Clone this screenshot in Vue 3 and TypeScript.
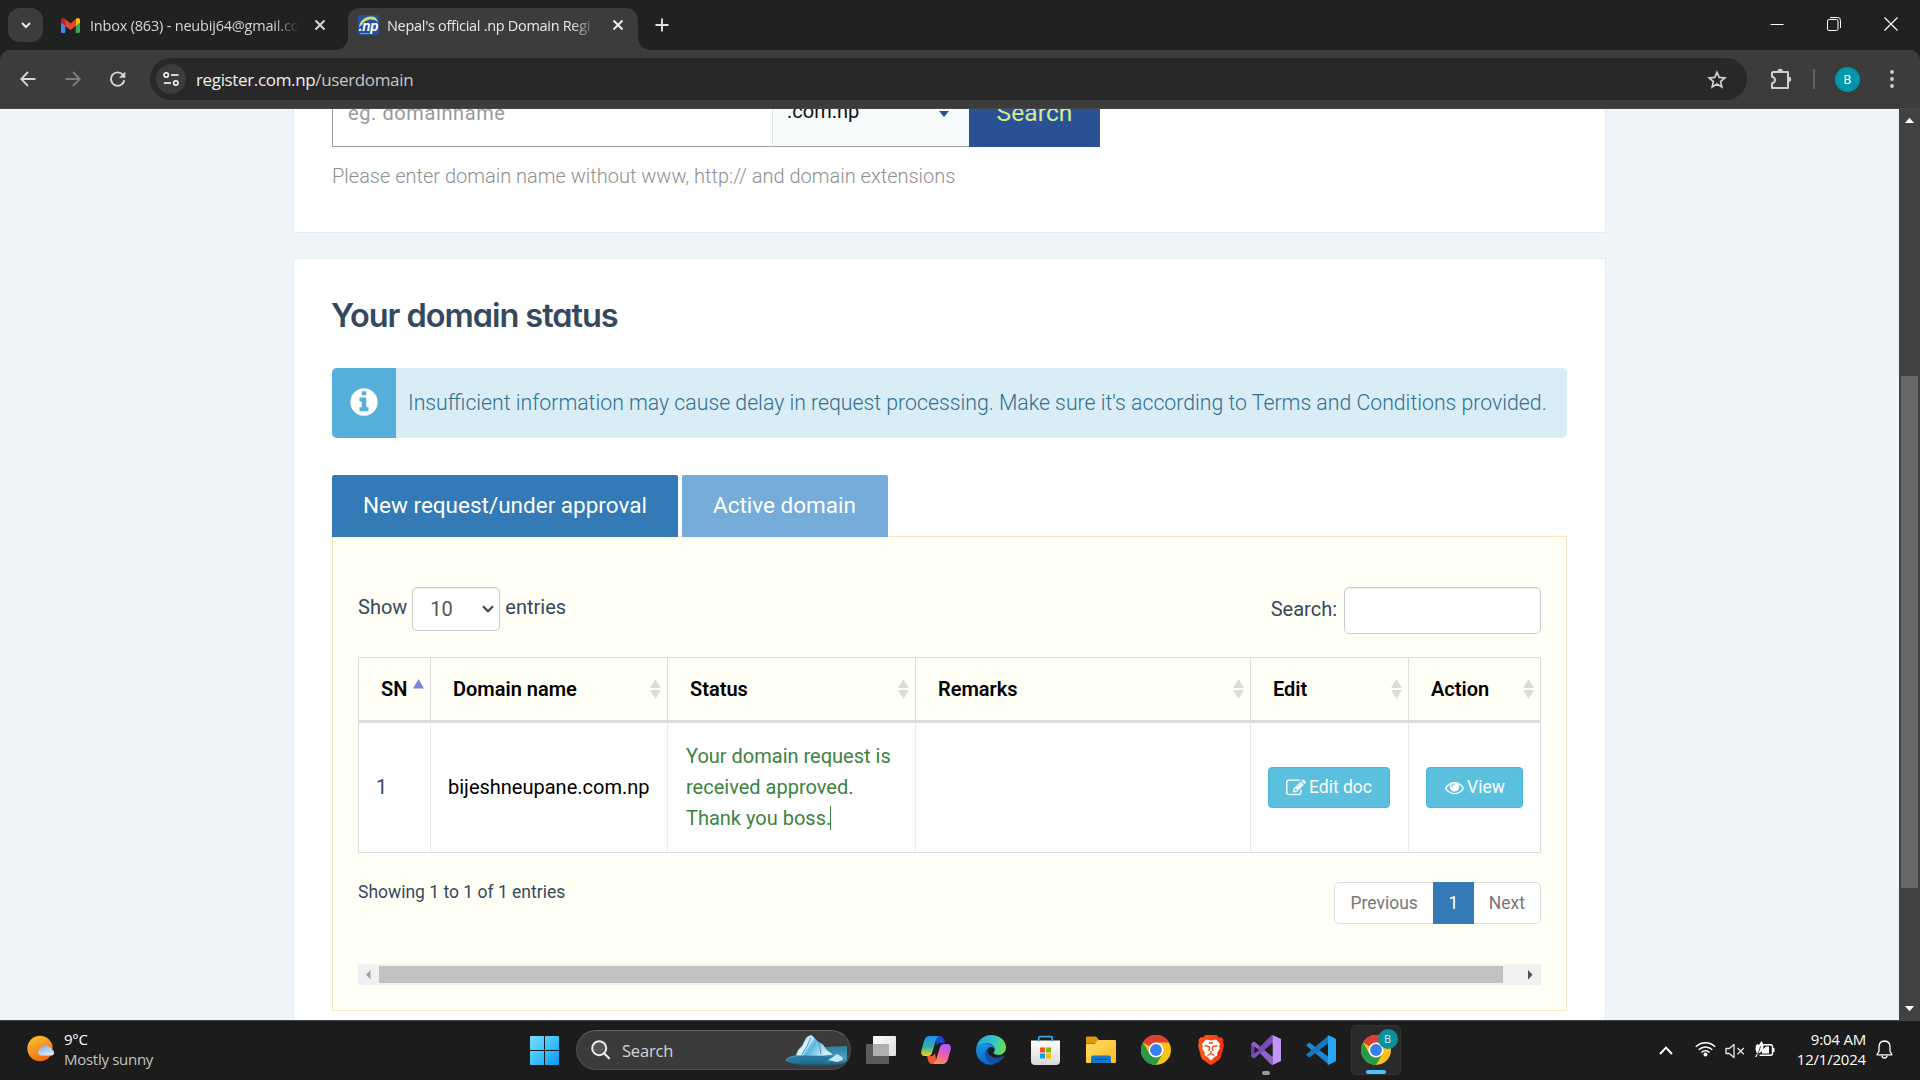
<script setup lang="ts">
import { ref } from 'vue'

interface Column {
  label: string
  width: number
  sorted?: boolean
}

const columns: Column[] = [
  { label: 'SN', width: 72, sorted: true },
  { label: 'Domain name', width: 237 },
  { label: 'Status', width: 248 },
  { label: 'Remarks', width: 335 },
  { label: 'Edit', width: 158 },
  { label: 'Action', width: 132 },
]

const tabs = ['New request/under approval', 'Active domain']
const activeTab = ref(0)
const page = ref(1)
</script>

<template>
  <div class="screen">
    <!-- Browser tab strip -->
    <header class="strip">
      <button class="tab-search">
        <svg width="12" height="12" viewBox="0 0 12 12"><path d="M2 4l4 4 4-4" fill="none" stroke="#e8e8e8" stroke-width="2" /></svg>
      </button>
      <div class="tab">
        <svg class="gmail" width="19" height="15" viewBox="0 0 19 15">
          <path d="M0 2v11.700q0 1.300 1.300 1.300H4.300V5z" fill="#4285f4" />
          <path d="M19 2v11.700q0 1.300-1.300 1.300h-3V5z" fill="#34a853" />
          <path d="M14.700 1.300V8L19 4.600V2.200C19 .2 16.700-.7 15.300.8z" fill="#fbbc04" />
          <path d="M0 2.200v2.400L4.300 8V1.300L3.700.8C2.300-.7 0 .2 0 2.200z" fill="#c5221f" />
          <path d="M4.300 1.300V8l5.200 4 5.200-4V1.300L9.500 5.400z" fill="#ea4335" />
        </svg>
        <span class="tab-title first">Inbox (863) - neubij64@gmail.co</span>
        <svg class="close" width="12" height="12" viewBox="0 0 12 12"><path d="M1.500 1.500l9 9M10.500 1.500l-9 9" stroke="#d8d8d8" stroke-width="1.900" /></svg>
      </div>
      <div class="tab active">
        <svg class="favicon" width="21" height="20" viewBox="0 0 21 20">
          <rect width="21" height="20" rx="1.500" fill="#27519b" />
          <path d="M1 12C2 4 11-1 18 3l2 4C14 2 6 5 4 10z" fill="#c9e265" />
          <path d="M2 18.500h9" stroke="#7fa65a" stroke-width="1" />
          <text x="0.500" y="15.500" font-size="14" font-weight="700" font-style="italic" fill="#fff" textLength="20" lengthAdjust="spacingAndGlyphs" font-family="Liberation Sans, sans-serif">.np</text>
        </svg>
        <span class="tab-title second">Nepal's official .np Domain Regi</span>
        <svg class="close" width="12" height="12" viewBox="0 0 12 12"><path d="M1.500 1.500l9 9M10.500 1.500l-9 9" stroke="#f0f0f0" stroke-width="1.900" /></svg>
      </div>
      <svg class="plus" width="14" height="14" viewBox="0 0 14 14"><path d="M7 .5v13M.5 7h13" stroke="#e0e0e0" stroke-width="1.900" /></svg>
      <div class="win-controls">
        <svg width="14" height="14" viewBox="0 0 14 14"><path d="M.5 7.500h13" stroke="#fff" /></svg>
        <svg width="14" height="14" viewBox="0 0 14 14"><rect x=".5" y="2.500" width="10.500" height="11" rx="1.500" fill="none" stroke="#fff" /><path d="M3 .5h7.500q3 0 3 3V11" fill="none" stroke="#fff" /></svg>
        <svg width="14" height="14" viewBox="0 0 14 14"><path d="M.5.5l13 13M13.500.5l-13 13" stroke="#fff" stroke-width="1.200" /></svg>
      </div>
    </header>

    <!-- Browser toolbar -->
    <div class="toolbar-wrap">
      <div class="toolbar">
        <svg class="nav" width="16" height="16" viewBox="0 0 16 16"><path d="M15.500 8H1.500M8 1L1.200 8 8 15" fill="none" stroke="#d5d5d5" stroke-width="1.800" /></svg>
        <svg class="nav" width="16" height="16" viewBox="0 0 16 16"><path d="M.5 8h14M8 1l6.800 7L8 15" fill="none" stroke="#7d7d7d" stroke-width="1.800" /></svg>
        <svg class="nav" width="16" height="16" viewBox="0 0 16 16"><path d="M14.300 9.300A6.700 6.700 0 1 1 13.200 4.200L14.500 6" fill="none" stroke="#d5d5d5" stroke-width="1.900" /><path d="M15.300.5v6.300H9z" fill="#d5d5d5" /></svg>
        <div class="omnibox">
          <span class="site-chip">
            <svg width="16" height="14" viewBox="0 0 16 14"><g fill="none" stroke="#e6e6e6" stroke-width="1.800"><circle cx="3.200" cy="3" r="2.200" /><path d="M8 3h7.500" /><circle cx="12.800" cy="11" r="2.200" /><path d="M.8 11H8" /></g></svg>
          </span>
          <span class="url">register.com.np<i>/userdomain</i></span>
          <svg class="star" width="20" height="19" viewBox="0 0 20 19"><path d="M10 2.300l2.250 5.100 5.550.5-4.200 3.700 1.250 5.400L10 14.100 5.150 17l1.250-5.400L2.200 7.900l5.550-.5z" fill="none" stroke="#d0d0d0" stroke-width="1.700" /></svg>
        </div>
        <svg class="puzzle" width="22" height="22" viewBox="0 0 22 22"><path d="M2 4h16v5.500M18 13v7H2v-4.700q3-.6 3-3.300t-3-3.300V4" fill="none" stroke="#cfcfcf" stroke-width="2" stroke-linejoin="round" /><path d="M7.500 3.500a2.700 2.700 0 0 1 5.400 0zM18.500 8.600a2.700 2.700 0 0 1 0 5.400z" fill="#cfcfcf" /><path d="M18 8v6" stroke="#cfcfcf" stroke-width="2" /></svg>
        <span class="sep"></span>
        <span class="avatar">B</span>
        <svg class="dots" width="4" height="20" viewBox="0 0 4 20"><g fill="#d0d0d0"><circle cx="2" cy="3" r="1.900" /><circle cx="2" cy="10" r="1.900" /><circle cx="2" cy="17" r="1.900" /></g></svg>
      </div>
    </div>

    <!-- Page -->
    <div class="viewport">
      <main class="page">
        <section class="card search-card">
          <div class="search-row">
            <div class="domain-input">eg. domainname</div>
            <div class="ext-select">.com.np<span class="caret"></span></div>
            <button class="search-btn">Search</button>
          </div>
          <p class="hint">Please enter domain name without www, http:// and domain extensions</p>
        </section>

        <section class="card status-card">
          <h2>Your domain status</h2>
          <div class="alert">
            <span class="alert-icon">
              <svg width="32" height="32" viewBox="0 0 1792 1792"><path fill="#fff" d="M1152 1376v-160q0-14-9-23t-23-9h-96v-512q0-14-9-23t-23-9h-320q-14 0-23 9t-9 23v160q0 14 9 23t23 9h96v320h-96q-14 0-23 9t-9 23v160q0 14 9 23t23 9h448q14 0 23-9t9-23zm-128-896v-160q0-14-9-23t-23-9h-192q-14 0-23 9t-9 23v160q0 14 9 23t23 9h192q14 0 23-9t9-23zm640 416q0 209-103 385.500t-279.500 279.500-385.500 103-385.500-103-279.500-279.500-103-385.500 103-385.500 279.500-279.500 385.500-103 385.500 103 279.500 279.500 103 385.500z" /></svg>
            </span>
            <span class="alert-text">Insufficient information may cause delay in request processing. Make sure it's according to Terms and Conditions provided.</span>
          </div>

          <div class="tabs">
            <button v-for="(t, i) in tabs" :key="t" class="page-tab" :class="{ on: i === activeTab }" @click="activeTab = i">{{ t }}</button>
          </div>

          <div class="panel">
            <div class="controls">
              <div class="length">
                <span>Show</span>
                <div class="len-select">10
                  <svg width="12" height="8" viewBox="0 0 12 8"><path d="M1 1.200l5 5 5-5" fill="none" stroke="#444" stroke-width="2.100" /></svg>
                </div>
                <span>entries</span>
              </div>
              <label class="filter">Search:<input type="text" /></label>
            </div>

            <table>
              <colgroup><col v-for="c in columns" :key="c.label" :style="{ width: c.width + 'px' }" /></colgroup>
              <thead>
                <tr>
                  <th v-for="c in columns" :key="c.label">
                    <div class="th-inner">
                      <span>{{ c.label }}</span>
                      <svg v-if="c.sorted" width="11" height="22" viewBox="0 0 11 22"><path d="M5.500 1L11 10.500H0z" fill="#8080e0" /></svg>
                      <svg v-else width="11" height="22" viewBox="0 0 11 22"><path d="M5.500 1L11 10H0zM0 12h11L5.500 21z" fill="#dcdcdc" /></svg>
                    </div>
                  </th>
                </tr>
              </thead>
              <tbody>
                <tr>
                  <td>1</td>
                  <td class="name">bijeshneupane.com.np</td>
                  <td class="status">Your domain request is<br />received approved.<br />Thank you boss.<span class="cursor"></span></td>
                  <td></td>
                  <td>
                    <button class="btn">
                      <svg width="20" height="20" viewBox="0 0 1792 1792"><path fill="#fff" d="M888 1184l116-116-152-152-116 116v56h96v96h56zm440-720q-16-16-33 1l-350 350q-17 17-1 33t33-1l350-350q17-17 1-33zm80 594v190q0 119-84.500 203.500t-203.500 84.500h-832q-119 0-203.500-84.500t-84.500-203.500v-832q0-119 84.500-203.500t203.500-84.500h832q63 0 117 25 15 7 18 23 3 17-9 29l-49 49q-14 14-32 8-23-6-45-6h-832q-66 0-113 47t-47 113v832q0 66 47 113t113 47h832q66 0 113-47t47-113v-126q0-13 9-22l64-64q15-15 35-7t20 29zm-96-738l288 288-672 672h-288v-288zm444 132l-92 92-288-288 92-92q28-28 68-28t68 28l152 152q28 28 28 68t-28 68z" /></svg>
                      Edit doc
                    </button>
                  </td>
                  <td>
                    <button class="btn">
                      <svg width="19" height="19" viewBox="0 0 1792 1792"><path fill="#fff" d="M1664 960q-152-236-381-353 61 104 61 225 0 185-131.500 316.500t-316.500 131.500-316.500-131.500-131.500-316.500q0-121 61-225-229 117-381 353 133 205 333.500 326.500t434.500 121.500 434.500-121.500 333.500-326.500zm-720-384q0-20-14-34t-34-14q-125 0-214.500 89.500t-89.500 214.500q0 20 14 34t34 14 34-14 14-34q0-86 61-147t147-61q20 0 34-14t14-34zm848 384q0 34-20 69-140 230-376.500 368.500t-499.500 138.500-499.500-139-376.500-368q-20-35-20-69t20-69q140-229 376.500-368t499.500-139 499.500 139 376.500 368q20 35 20 69z" /></svg>
                      View
                    </button>
                  </td>
                </tr>
              </tbody>
            </table>

            <div class="table-foot">
              <span>Showing 1 to 1 of 1 entries</span>
              <nav class="pager"><a>Previous</a><a class="current">{{ page }}</a><a>Next</a></nav>
            </div>

            <div class="hscroll">
              <svg width="21" height="21" viewBox="0 0 21 21"><path d="M12.500 6v9.500L8 10.700z" fill="#a3a3a3" /></svg>
              <span class="hthumb"></span>
              <svg class="right" width="21" height="21" viewBox="0 0 21 21"><path d="M8 6v9.500l4.500-4.800z" fill="#505050" /></svg>
            </div>
          </div>
        </section>
      </main>

      <div class="vscroll">
        <svg width="21" height="21" viewBox="0 0 21 21"><path d="M6 14l4.500-5.200L15 14z" fill="#fff" /></svg>
        <span class="vthumb"></span>
        <svg width="21" height="21" viewBox="0 0 21 21"><path d="M6 8l4.500 5.200L15 8z" fill="#fff" /></svg>
      </div>
    </div>

    <!-- Windows taskbar -->
    <footer class="taskbar">
      <div class="weather">
        <svg width="30" height="28" viewBox="0 0 30 28">
          <defs>
            <linearGradient id="sun" x1="0.200" y1="0" x2="0.700" y2="1"><stop offset="0" stop-color="#f7c331" /><stop offset="1" stop-color="#f4650c" /></linearGradient>
            <linearGradient id="cloud" x1="0" y1="0" x2="0.500" y2="1"><stop offset="0" stop-color="#7fa6e6" /><stop offset="1" stop-color="#d9e6fb" /></linearGradient>
          </defs>
          <circle cx="13" cy="13.500" r="12.700" fill="url(#sun)" />
          <path d="M13.500 20.500a3.400 3.400 0 0 1-.2-6.500 5 5 0 0 1 9-1.800q2.500.3 2.700 2.600a3 3 0 0 1 .2 5.700z" fill="url(#cloud)" />
        </svg>
        <div class="weather-text"><b>9°C</b><span>Mostly sunny</span></div>
      </div>

      <div class="apps">
        <div class="cell start">
          <svg width="29" height="29" viewBox="0 0 29 29">
            <defs><linearGradient id="win" x1="0" y1="0" x2="1" y2="1"><stop offset="0" stop-color="#7adcff" /><stop offset=".5" stop-color="#3cc3fb" /><stop offset="1" stop-color="#0a93f5" /></linearGradient></defs>
            <path d="M1 0h13v14H0V1q0-1 1-1zM15 0h13q1 0 1 1v13H15zM0 15h14v14H1q-1 0-1-1zM15 15h14v13q0 1-1 1H15z" fill="url(#win)" />
          </svg>
        </div>
        <div class="task-search">
          <svg width="19" height="20" viewBox="0 0 19 20"><circle cx="8.200" cy="8.200" r="7" fill="#555" stroke="#ececec" stroke-width="2" /><path d="M13 13.300l5 5" stroke="#ececec" stroke-width="2.200" stroke-linecap="round" /></svg>
          <span>Search</span>
          <svg class="iceberg" width="62" height="31" viewBox="0 0 62 31">
            <defs>
              <linearGradient id="sea" x1="0" y1="0" x2="0" y2="1"><stop offset="0" stop-color="#2b7e9c" /><stop offset=".6" stop-color="#4d9fc0" /><stop offset="1" stop-color="#0f4c6e" /></linearGradient>
              <linearGradient id="ice" x1="0" y1="0" x2="1" y2=".4"><stop offset="0" stop-color="#4aa7d6" /><stop offset=".4" stop-color="#e2f7ff" /><stop offset=".55" stop-color="#58b3df" /><stop offset="1" stop-color="#d4f1fc" /></linearGradient>
            </defs>
            <path d="M36 12.500q13-1.500 26-1.500v14q-1 3-8 4.500-20 3-40 .5Q4 28.500 0 25q4-4 12-5z" fill="url(#sea)" />
            <path d="M11 20l2-5 4-4 4-8q3-3.500 6-2.500l6 6 5 3 4 6 6 4-10 1q-18 1-27-.500z" fill="url(#ice)" />
            <path d="M26 2l-4 9-5 8M34 8l2 11" stroke="#3d9dca" stroke-width="1" fill="none" />
            <path d="M1 25q8-5 21-4.500t28 1l-8 5q-20 4-41-1.500z" fill="#1f6d94" opacity=".75" />
            <path d="M43 25l5-3 4-3 5 3 1 3-6 2z" fill="#bfe7f7" />
          </svg>
        </div>
        <div class="cell">
          <svg width="30" height="28" viewBox="0 0 30 28"><defs><linearGradient id="tv" x1="0" y1="0" x2="1" y2="1"><stop offset="0" stop-color="#fff" /><stop offset="1" stop-color="#dcdcdc" /></linearGradient></defs><rect x="0" y="8" width="23" height="20" rx="1" fill="#5b5b5b" /><rect x="7" y="0" width="23" height="20" rx="1" fill="url(#tv)" /><path d="M7 8h16v12H7z" fill="#b0b0b0" /></svg>
        </div>
        <div class="cell">
          <svg width="30" height="28" viewBox="0 0 30 28">
            <defs>
              <linearGradient id="cpA" x1="0" y1="0" x2="0" y2="1"><stop offset="0" stop-color="#1c8ef0" /><stop offset=".55" stop-color="#2fb3a6" /><stop offset="1" stop-color="#f5d515" /></linearGradient>
              <linearGradient id="cpB" x1=".3" y1="0" x2="0" y2="1"><stop offset="0" stop-color="#b25cf0" /><stop offset=".5" stop-color="#f2639c" /><stop offset="1" stop-color="#ff9a4a" /></linearGradient>
            </defs>
            <path d="M14 0h5q3 0 4 4l1 3h-5q-2 0-3 3z" fill="#1c47c8" />
            <path d="M16 28h-5q-3 0-4-4l-1-4h5q2 0 3-3z" fill="#f0562f" />
            <path d="M8 0h10q-2 1-3 4l-4 13q-1 3-4 3H4q-5 0-3.500-6L3 5Q4.500 0 8 0z" fill="url(#cpA)" />
            <path d="M22 28H12q2-1 3-4l4-13q1-3 4-3h3q5 0 3.500 6L27 23q-1.500 5-5 5z" fill="url(#cpB)" />
          </svg>
        </div>
        <div class="cell">
          <svg width="30" height="30" viewBox="0 0 30 30">
            <defs>
              <linearGradient id="edA" x1="0" y1=".3" x2="1" y2=".5"><stop offset="0" stop-color="#2ba5e4" /><stop offset=".6" stop-color="#35c6c3" /><stop offset="1" stop-color="#6be04d" /></linearGradient>
              <linearGradient id="edB" x1="0" y1="0" x2=".5" y2="1"><stop offset="0" stop-color="#1b9de2" /><stop offset="1" stop-color="#0b65c9" /></linearGradient>
            </defs>
            <path d="M.2 14C1 5.500 7.500 0 15 0c9 0 15 6 15 12.500 0 4.500-3.500 7.500-7.500 7.500-3 0-5-1-5-2.200 0-.8 1.200-1.400 1.200-3.300C18.700 11 15 8 10.500 8 5.500 8 1.500 10.500.2 14z" fill="url(#edA)" />
            <path d="M.2 14C1 10.500 5 7.800 9.500 8c5 .2 8.500 3 8.900 5.500-1-1.300-2.400-1.800-3.900-1.500-3 .6-4.500 4-3.700 8 .8 4.500 4.500 8 8.200 9C9 32-.8 24.500.2 14z" fill="url(#edB)" />
            <path d="M11.500 13.500c-3.500 3.500-3 9 1 12.500 4.500 4 11 3 15.500-4 .5-.8-.2-1.200-1-.8-6 2.700-12.500 1.300-14.500-2.700-.9-1.900-1-3.500-1-5z" fill="#124f9d" />
          </svg>
        </div>
        <div class="cell">
          <svg width="29" height="30" viewBox="0 0 29 30">
            <defs><linearGradient id="st" x1="0" y1="0" x2="0" y2="1"><stop offset="0" stop-color="#fff" /><stop offset="1" stop-color="#d9d9d9" /></linearGradient></defs>
            <path d="M0 5.500h29V26q0 4-4 4H4q-4 0-4-4z" fill="url(#st)" />
            <path d="M7.700 6.500V3q0-1.300 1.300-1.300h11q1.300 0 1.300 1.300v3.500" fill="none" stroke="#2fa9e4" stroke-width="1.700" />
            <path d="M9 12.500h5v5H9z" fill="#f25022" /><path d="M15 12.500h5v5h-5z" fill="#7fba00" /><path d="M9 18.500h5v5H9z" fill="#00a4ef" /><path d="M15 18.500h5v5h-5z" fill="#ffb900" />
          </svg>
        </div>
        <div class="cell">
          <svg width="30" height="28" viewBox="0 0 30 28">
            <defs><linearGradient id="fo" x1="0" y1="0" x2="1" y2="1"><stop offset="0" stop-color="#ffd968" /><stop offset="1" stop-color="#f9bd22" /></linearGradient></defs>
            <path d="M0 1.500Q0 .5 1 .5h8q1.500 0 2.500 1.500l1.500 2v3H0z" fill="#dc9a08" />
            <path d="M0 7.500h9l3-3.500h17q1 0 1 1v21q0 1-1 1H1q-1 0-1-1z" fill="url(#fo)" />
            <path d="M5 27v-5q0-2.500 2.500-2.500h15Q25 19.500 25 22v5z" fill="#1478cf" /><path d="M8.500 23.300h13" stroke="#0b4d90" stroke-width="1.300" />
          </svg>
        </div>
        <div class="cell">
          <svg width="30" height="30" viewBox="0 0 30 30">
            <circle cx="15" cy="15" r="15" fill="#fbc116" />
            <path d="M2 7.500A15 15 0 0 1 28 7.500H15L8.500 11.300z" fill="#dc4035" />
            <path d="M2 7.500A15 15 0 0 0 15 30l6.500-11.300L15 22.500 8.500 18.700z" fill="#2a9a47" />
            <circle cx="15" cy="15" r="7.500" fill="#fff" /><circle cx="15" cy="15" r="5.900" fill="#3b7ded" />
          </svg>
        </div>
        <div class="cell">
          <svg width="26" height="30" viewBox="0 0 26 30">
            <defs><linearGradient id="br" x1="0" y1="0" x2="1" y2="0"><stop offset="0" stop-color="#ff5a1c" /><stop offset="1" stop-color="#fb2f0c" /></linearGradient></defs>
            <path d="M7.500 0h11l2.500 2.500 2.500-.3L25.500 5 25 7.500l1 2.700-3 11.500q-.6 2-2.300 3.200L14.500 29.300q-1.500 1-3 0L5.300 24.900Q3.600 23.700 3 21.700L0 10.200l1-2.700L.5 5l2-2.800 2.500.3z" fill="url(#br)" />
            <path d="M8 4.500l5 1 5-1 4 4.500-1 2.500 1 1.500-3 5 .5 2-3.500 2.500L13 25.500 10 22.500 6.500 20l.5-2-3-5 1-1.500L4 9z" fill="#fff" />
            <path d="M6.500 10.500l4.500 1 .7 1.800-1 2.700M19.500 10.500l-4.500 1-.7 1.800 1 2.700M13 16v2.500M9.500 20.500l3.500-2 3.500 2M11 7.500l2 .7 2-.7" stroke="#fb481a" stroke-width="1.400" fill="none" />
          </svg>
        </div>
        <div class="cell">
          <svg width="30" height="30" viewBox="0 0 30 30">
            <path d="M0 9l3-2.500L8 10.500v9L3 23.500 0 21z" fill="#6a3fa6" />
            <path d="M0 9l3-2.500 18.500 15.500V30L20 29.500z" fill="#8e62c9" />
            <path d="M0 21l3 2.500L21.500 8V0L20 .5z" fill="#7a4cb8" />
            <path d="M21.500 0L30 4v22l-8.500 4z" fill="#c394f7" />
            <path d="M3.500 11.500v7L8 15z" fill="#1e1e1e" /><path d="M21.500 9.500v11L14.500 15z" fill="#1e1e1e" />
          </svg>
          <span class="run"></span>
        </div>
        <div class="cell">
          <svg width="30" height="30" viewBox="0 0 30 30">
            <path d="M.7 9.500l1.800-1.600q.8-.6 1.600 0L22 21.500V29L.7 11q-.9-.7 0-1.500z" fill="#1b86cd" />
            <path d="M.7 20.500l1.800 1.600q.8.600 1.600 0L22 8.500V1L.7 19q-.9.700 0 1.500z" fill="#1677bb" />
            <path d="M21 .5q.6-.7 1.500-.3l6.400 3Q30 3.800 30 5v20q0 1.200-1.100 1.800l-6.400 3q-.9.400-1.500-.3 1 .5 1-1V1.500q0-1.500-1-1z" fill="#2aa6f0" />
          </svg>
        </div>
        <div class="cell">
          <div class="active-app">
            <svg width="30" height="30" viewBox="0 0 30 30">
              <circle cx="15" cy="15" r="15" fill="#fbc116" />
              <path d="M2 7.500A15 15 0 0 1 28 7.500H15L8.500 11.300z" fill="#dc4035" />
              <path d="M2 7.500A15 15 0 0 0 15 30l6.500-11.300L15 22.500 8.500 18.700z" fill="#2a9a47" />
              <circle cx="15" cy="15" r="7.500" fill="#fff" /><circle cx="15" cy="15" r="5.900" fill="#3b7ded" />
            </svg>
            <span class="badge">B</span>
            <span class="run on"></span>
          </div>
        </div>
      </div>

      <div class="tray">
        <svg width="14" height="9" viewBox="0 0 14 9"><path d="M1 8l6-6.300L13 8" fill="none" stroke="#fff" stroke-width="1.900" /></svg>
        <svg class="wifi" width="21" height="16" viewBox="0 0 21 16"><g fill="none" stroke="#fff" stroke-width="1.500"><path d="M.8 5.700a13.700 13.700 0 0 1 19.400 0" /><path d="M3.700 8.700a9.600 9.600 0 0 1 13.600 0" /><path d="M6.500 11.500a5.600 5.600 0 0 1 8 0" /></g><circle cx="10.500" cy="13.600" r="2" fill="#fff" /></svg>
        <svg class="sound" width="20" height="16" viewBox="0 0 20 16"><path d="M1 5.500h3.300L9 1.500v13l-4.700-4H1z" fill="none" stroke="#e8e8e8" stroke-width="1.300" stroke-linejoin="round" /><path d="M12.500 5l6.300 6.300M18.800 5l-6.300 6.300" stroke="#e8e8e8" stroke-width="1.300" /></svg>
        <svg class="battery" width="20" height="18" viewBox="0 0 20 18"><path d="M8 4.700h7.500q2 0 2 2v6.600q0 2-2 2h-11" fill="none" stroke="#fff" stroke-width="1.400" /><path d="M18 8h1.500v4H18z" fill="#fff" /><path d="M7 13.500V10l4-3.500h3v7z" fill="#fff" /><path d="M0 17l2-3.500Q-1 8 2 4l2 1 2.500-4q3 3.500 1.500 8-1 3.500-5 4.500L1.500 17z" fill="#fff" /><path d="M2.500 14q2-3 3-8" stroke="#1c1c1c" stroke-width=".8" fill="none" /></svg>
        <div class="clock"><span>9:04 AM</span><span>12/1/2024</span></div>
        <svg class="bell" width="17" height="19" viewBox="0 0 17 19"><path d="M8.500 1Q14 1.300 14 7v4.200l2 3.600H1l2-3.600V7q0-5.700 5.500-6z" fill="none" stroke="#fff" stroke-width="1.300" stroke-linejoin="round" /><path d="M6 15.500a2.500 2.500 0 0 0 5 0" fill="none" stroke="#fff" stroke-width="1.300" /></svg>
      </div>
    </footer>
  </div>
</template>

<style>
html, body { background: #202221; overflow: hidden; }
</style>

<style scoped>
* { box-sizing: border-box; }
button { border: 0; font: inherit; margin: 0; }
svg { display: block; flex: none; }
.screen { width: 1920px; height: 1080px; display: flex; flex-direction: column; overflow: hidden; font-family: Roboto, sans-serif; }

.strip { height: 50px; background: #202221; display: flex; font-family: "Open Sans", sans-serif; font-size: 14.500px; color: #d6d6d6; }
.tab-search { width: 35px; height: 34px; margin: 8px 0 0 8px; border-radius: 12px; background: #3c3c3c; display: flex; align-items: center; justify-content: center; padding: 0; }
.tab { height: 42px; margin-top: 8px; display: flex; align-items: center; padding-bottom: 8px; }
.tab:not(.active) { width: 305px; padding-left: 18px; }
.tab-title { white-space: nowrap; overflow: hidden; -webkit-mask-image: linear-gradient(90deg, #000 87%, transparent 99%); mask-image: linear-gradient(90deg, #000 87%, transparent 99%); }
.tab-title.first { margin-left: 10px; width: 211px; letter-spacing: -0.200px; }
.tab-title.second { margin-left: 8px; width: 212px; letter-spacing: -0.300px; color: #e8e8e8; }
.tab .close { margin-left: 13px; }
.tab.active { position: relative; width: 290px; padding-left: 10px; background: #3c3c3c; border-radius: 12px 12px 0 0; }
.tab.active::before, .tab.active::after { content: ""; position: absolute; bottom: 0; width: 12px; height: 12px; }
.tab.active::before { left: -12px; background: radial-gradient(circle at 0 0, transparent 11.500px, #3c3c3c 12px); }
.tab.active::after { right: -12px; background: radial-gradient(circle at 100% 0, transparent 11.500px, #3c3c3c 12px); }
.plus { margin: 18px 0 0 17px; }
.win-controls { margin: 17px 22px 0 auto; display: flex; gap: 43px; }

.toolbar-wrap { background: #202221; height: 59px; }
.toolbar { height: 59px; background: #3c3c3c; border-bottom: 1px solid #4a4644; border-radius: 10px 10px 0 0; display: flex; align-items: center; padding: 0 25px 0 20px; }
.nav { margin-right: 29px; }
.nav:nth-child(3) { margin-right: 24px; }
.omnibox { width: 1597px; height: 42px; border-radius: 21px; background: #282828; display: flex; align-items: center; padding: 0 20px 0 6px; }
.site-chip { width: 30px; height: 30px; border-radius: 50%; background: #3c3c3c; display: flex; align-items: center; justify-content: center; }
.url { margin-left: 10px; font: 17px "Open Sans", sans-serif; letter-spacing: -0.350px; color: #f0f0f0; }
.url i { font-style: normal; color: #c7c7c7; }
.star { margin-left: auto; }
.puzzle { margin-left: 23px; }
.sep { width: 2px; height: 20px; background: #616161; margin-left: 21px; }
.avatar { width: 25px; height: 25px; border-radius: 50%; background: #0097a7; color: #fff; display: flex; align-items: center; justify-content: center; margin-left: 20px; font-size: 12.500px; }
.dots { margin-left: auto; margin-right: 1px; }

.viewport { height: 911px; display: flex; overflow: hidden; background: #f0f5f9; }
.page { width: 1899px; height: 911px; overflow: hidden; }
.card { width: 1313px; margin-left: 293px; background: #fff; border: 1px solid #e3ecee; padding: 0 38px; }
.search-card { height: 124px; border-top: 0; overflow: hidden; }
.search-row { height: 75px; margin-top: -37px; display: flex; }
.domain-input { width: 440px; border: 1px solid #9a9da3; border-right: 0; padding: 26px 0 0 15px; font-size: 20px; line-height: 29px; letter-spacing: 0.600px; color: #999; }
.ext-select { width: 197px; background: #f6fafb; border: 1px solid #9a9da3; border-left-color: #e0e8ea; border-right: 0; padding: 24px 20px 0 14px; font-size: 20px; line-height: 29px; color: #111; display: flex; justify-content: space-between; }
.caret { width: 0; height: 0; border: 5.500px solid transparent; border-top: 6px solid #2a5196; border-bottom: 0; margin-top: 14px; }
.search-btn { width: 131px; background: #2a5196; color: #d3ec8c; font-size: 24.500px; letter-spacing: 0.100px; line-height: 29px; padding: 6px 0 0; }
.hint { margin: 13px 0 0; font-size: 20px; font-weight: 300; line-height: 32px; color: #8f8f8f; }

.status-card { margin-top: 25px; height: 820px; }
h2 { margin: 36px 0 0 -1px; height: 73px; font: 600 32.500px/41px Inter, sans-serif; letter-spacing: -1.050px; font-feature-settings: "cv11"; color: #34495e; }
.alert { height: 70px; display: flex; border-radius: 5px; overflow: hidden; background: #d9edf7; }
.alert-icon { width: 64px; background: #56afdb; display: flex; align-items: center; justify-content: center; padding-bottom: 2px; }
.alert-text { margin-left: 12px; font-size: 21.250px; font-weight: 300; line-height: 70px; color: #31708f; white-space: nowrap; }
.tabs { margin-top: 37px; height: 62px; display: flex; gap: 4px; position: relative; }
.page-tab { height: 62px; padding: 0 32px 2px 31px; background: #75acda; color: #fff; font-size: 22.500px; border-radius: 2px 2px 0 0; width: 206px; white-space: nowrap; }
.page-tab.on { background: #337ab7; width: 346px; }

.panel { margin-top: -1px; height: 475px; border: 1px solid #f8e7c0; background: #fffff5; padding: 50px 25px 0; color: #34495e; font-size: 20px; }
.controls { height: 70px; display: flex; justify-content: space-between; align-items: flex-start; }
.length { display: flex; }
.length > span { line-height: 40px; }
.len-select { width: 88px; height: 44px; margin: 0 5px; border: 1px solid #ccc; border-radius: 5px; background: #fff; box-shadow: inset 0 1px 1px rgba(0, 0, 0, .075); display: flex; align-items: center; justify-content: space-between; padding: 0 5px 0 17px; color: #555; }
.filter { display: flex; line-height: 45px; }
.filter input { width: 197px; height: 47px; margin-left: 7px; border: 1px solid #ccc; border-radius: 5px; background: #fff; box-shadow: inset 0 1px 1px rgba(0, 0, 0, .075); }

table { width: 1183px; table-layout: fixed; border-collapse: separate; border-spacing: 0; border: 1px solid #ddd; border-right: 0; }
th { height: 65px; padding: 0; border-right: 1px solid #ddd; border-bottom: 3px solid #ddd; text-align: left; font-weight: 600; color: #000; }
.th-inner { display: flex; align-items: center; justify-content: space-between; padding: 0 6px 0 22px; }
td { height: 129px; padding: 0 0 0 17px; background: #fff; border-right: 1px solid #e3ecee; vertical-align: middle; line-height: 31px; }
td:last-child, th:last-child { border-right-color: #ddd; }
.name { color: #000; white-space: nowrap; }
.status { color: #3c8340; white-space: nowrap; padding-left: 18px; }
.cursor { display: inline-block; width: 1px; height: 24px; background: #3c8340; vertical-align: -5px; margin-left: -1px; }
.btn { height: 41px; border: 1px solid #46b8da; border-radius: 4px; background: #5bc0de; color: #fff; font-size: 17.500px; padding: 0 17px; display: flex; align-items: center; gap: 3px; white-space: nowrap; }
td:last-child .btn { padding-left: 18px; }

.table-foot { margin-top: 29px; height: 42px; display: flex; justify-content: space-between; font-size: 17.500px; }
.table-foot > span { line-height: 20px; }
.pager { height: 42px; display: flex; line-height: 40px; color: #777; background: #fff; border: 1px solid #ddd; border-radius: 5px; }
.pager a { padding: 0 15px; }
.pager .current { margin: -1px 0; width: 41px; padding: 0; text-align: center; background: #337ab7; color: #fff; line-height: 42px; }

.hscroll { margin-top: 40px; height: 21px; width: 1183px; background: #f1f1f1; display: flex; align-items: center; }
.hthumb { width: 1124px; height: 17px; background: #c1c1c1; }
.hscroll .right { margin-left: auto; }

.vscroll { width: 21px; height: 911px; background: #424242; display: flex; flex-direction: column; }
.vthumb { width: 17px; height: 512px; margin: 246px auto 110px; background: #686868; }

.taskbar { height: 60px; background: #1c1c1c; border-top: 1px solid #414446; display: flex; align-items: center; font-family: "Open Sans", sans-serif; font-size: 15px; color: #fff; }
.weather { width: 503px; padding-left: 27px; display: flex; align-items: center; gap: 7px; }
.weather svg { margin-top: -3px; }
.weather-text { display: flex; flex-direction: column; line-height: 20px; letter-spacing: -0.280px; padding-bottom: 4px; }
.weather-text b { font-weight: 400; }
.weather-text span { color: #c4c4c4; }
.apps { display: flex; align-items: center; height: 59px; padding-bottom: 1px; }
.cell { width: 55px; height: 58px; display: flex; align-items: center; justify-content: center; position: relative; }
.start { width: 83px; margin-right: -10px; }
.task-search { width: 275px; height: 40px; border-radius: 20px; background: #3b3b3b; border: 1px solid #4e4e4e; border-top-color: #636363; display: flex; align-items: center; padding-left: 14px; margin-right: 2px; color: #d4d4d4; font-size: 16.500px; letter-spacing: -0.200px; }
.task-search span { margin-left: 12px; }
.iceberg { margin-left: auto; margin-right: 3px; }
.run { position: absolute; bottom: 4px; left: 50%; width: 8px; height: 4px; margin-left: -4px; border-radius: 2px; background: #9b9b9b; }
.run.on { width: 20px; margin-left: -10px; background: #4cc2ff; bottom: 0; }
.active-app { width: 50px; height: 50px; border-radius: 5px; background: #2a2a2a; border: 1px solid #343434; display: flex; align-items: center; justify-content: center; position: relative; }
.badge { position: absolute; top: 3px; left: 26px; width: 20px; height: 20px; border-radius: 50%; background: #0b8f9c; font-size: 11px; line-height: 20px; text-align: center; color: #cfeef0; }
.tray { margin-left: auto; display: flex; align-items: center; padding-right: 27px; }
.wifi { margin-left: 22px; margin-top: -3px; }
.sound { margin-left: 9px; }
.battery { margin-left: 10px; margin-top: -3px; }
.clock { width: 85px; margin: 0 10px 0 6px; padding-bottom: 4px; display: flex; flex-direction: column; align-items: flex-end; line-height: 20px; letter-spacing: -0.200px; }
.bell { margin-top: -2px; }
</style>
